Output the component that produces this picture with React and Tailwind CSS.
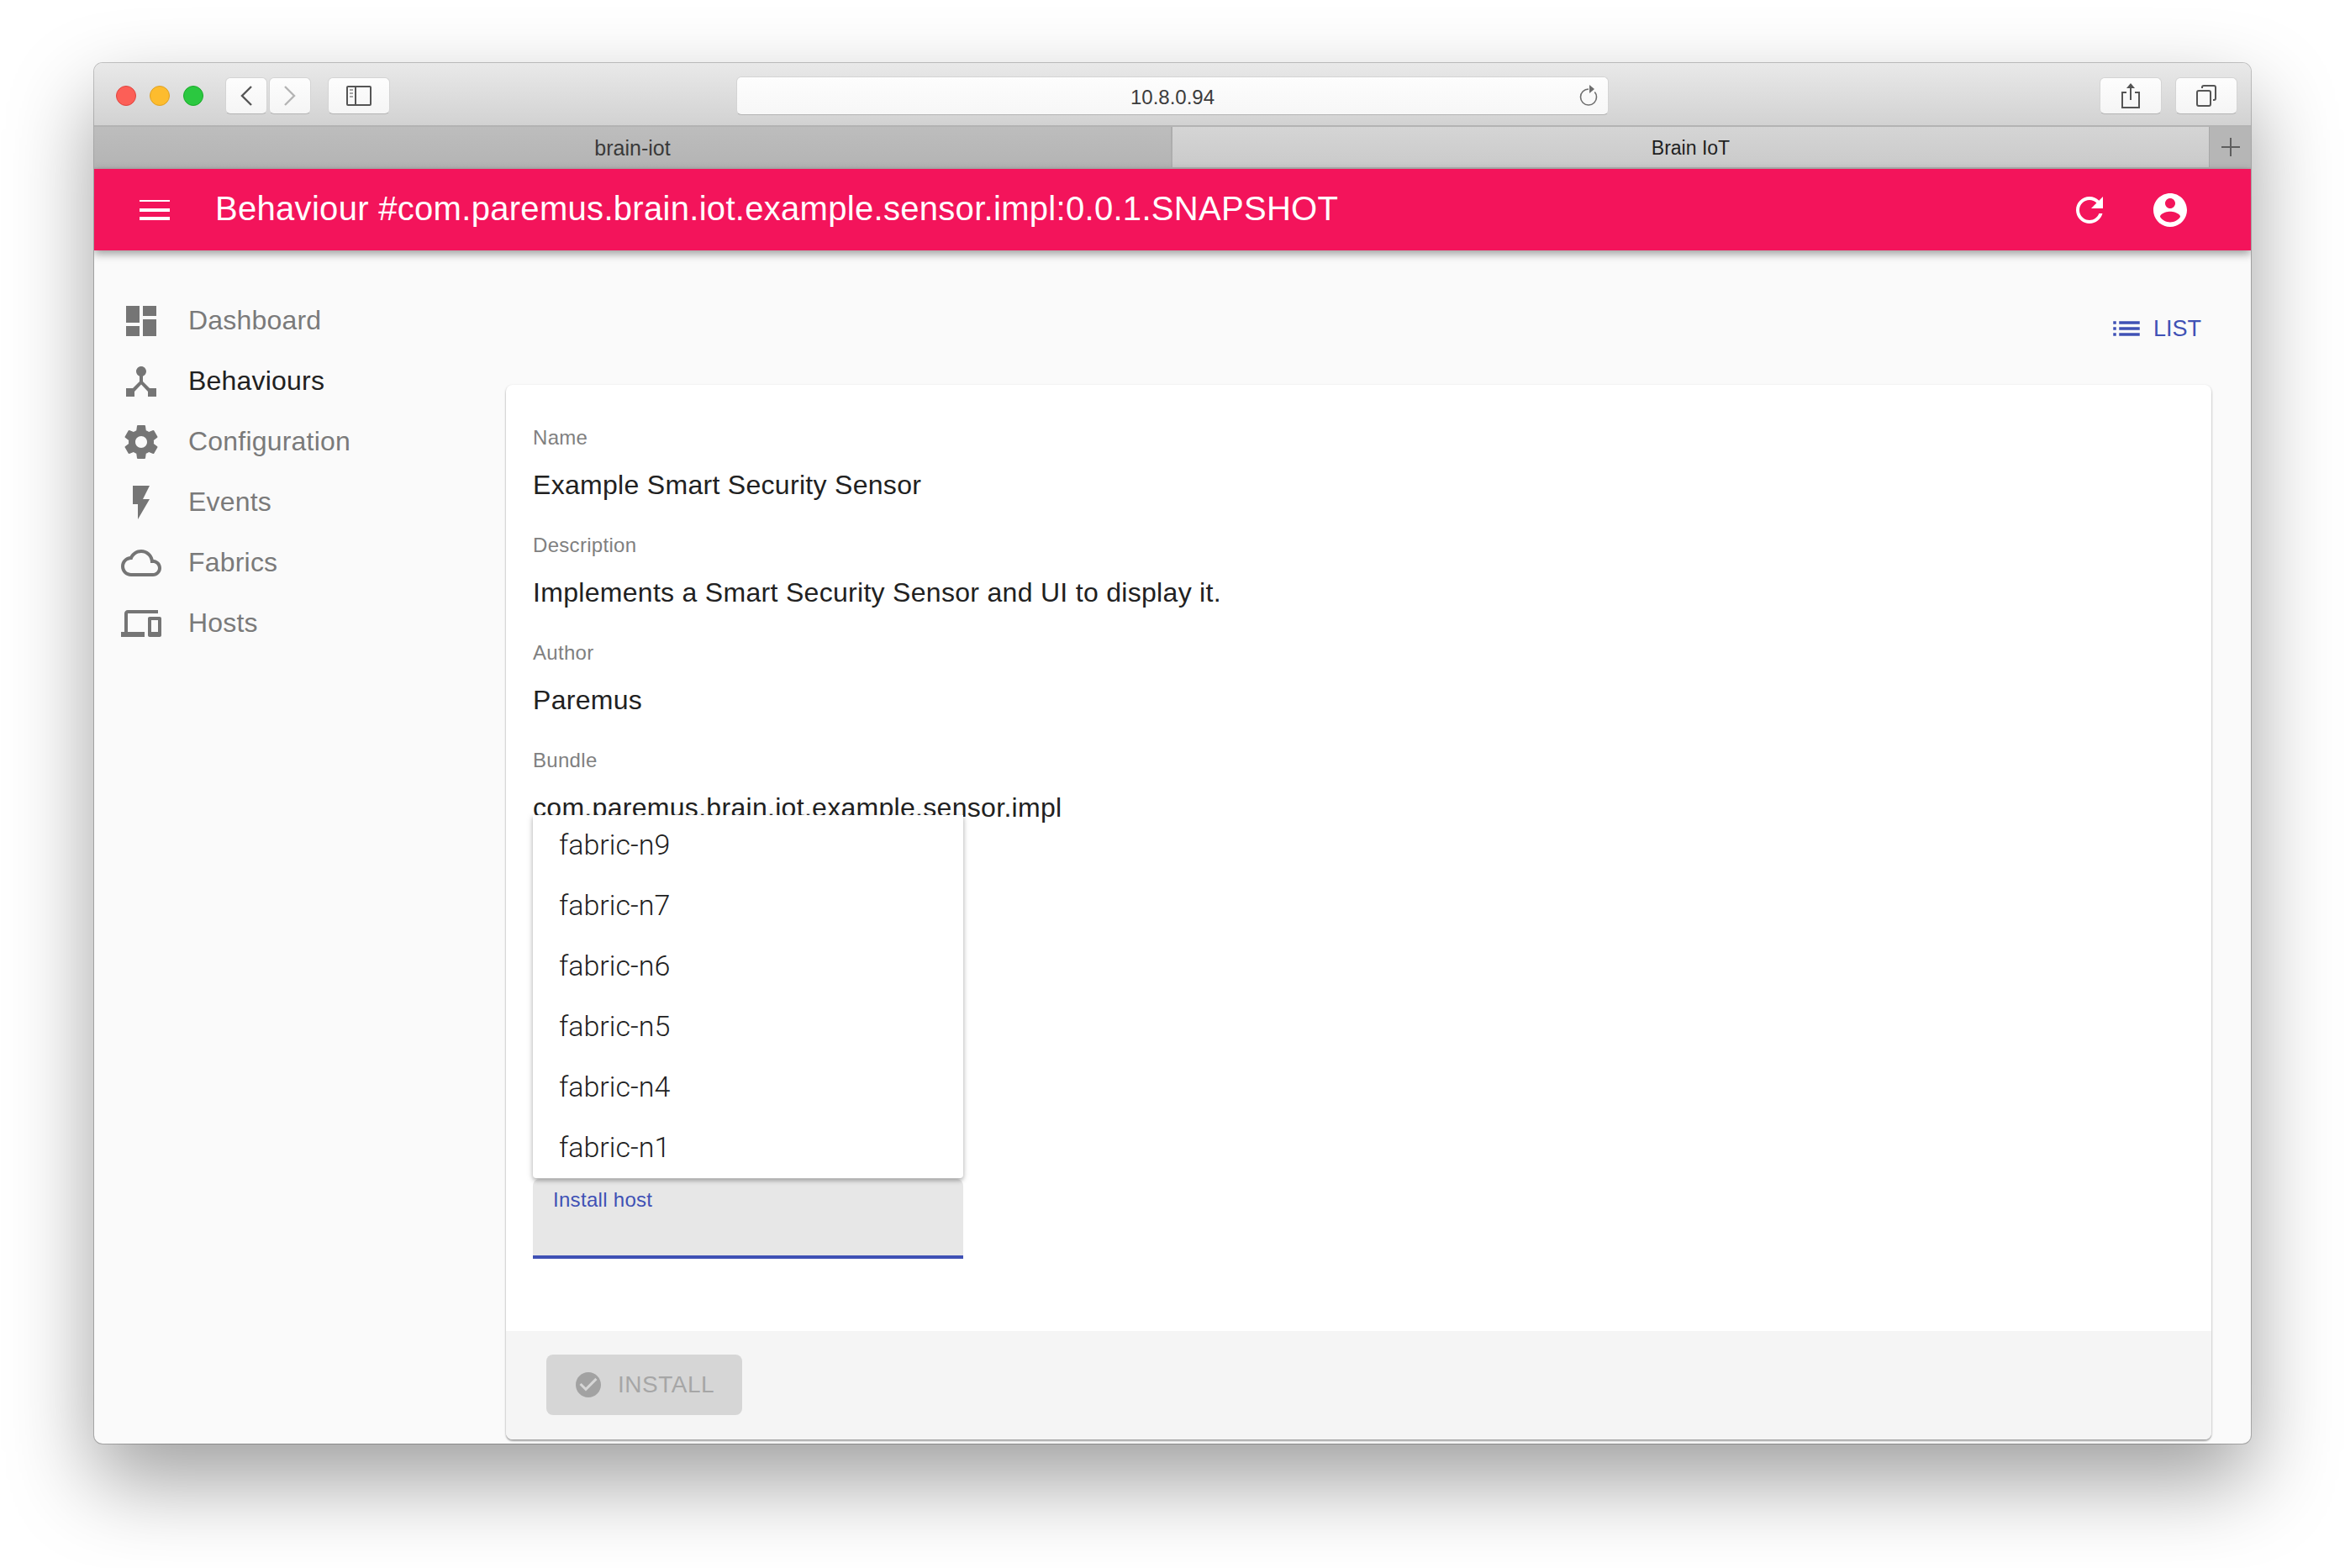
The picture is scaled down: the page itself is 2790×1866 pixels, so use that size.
import React from 'react';

const navItems = [
    { label: 'Dashboard', d: 'M3 13h8V3H3v10zm0 8h8v-6H3v6zm10 0h8V11h-8v10zm0-18v6h8V3h-8z' },
    { label: 'Behaviours', active: true, d: 'M17 16l-4-4V8.82C14.16 8.4 15 7.3 15 6c0-1.66-1.34-3-3-3S9 4.34 9 6c0 1.3.84 2.4 2 2.82V12l-4 4H3v5h5v-3.05l4-4.2 4 4.2V21h5v-5h-4z' },
    { label: 'Configuration', d: 'M19.43 12.98c.04-.32.07-.64.07-.98s-.03-.66-.07-.98l2.11-1.65c.19-.15.24-.42.12-.64l-2-3.46c-.12-.22-.39-.3-.61-.22l-2.49 1c-.52-.4-1.08-.73-1.69-.98l-.38-2.65C14.46 2.18 14.25 2 14 2h-4c-.25 0-.46.18-.49.42l-.38 2.65c-.61.25-1.17.59-1.69.98l-2.49-1c-.23-.09-.49 0-.61.22l-2 3.46c-.13.22-.07.49.12.64l2.11 1.65c-.04.32-.07.65-.07.98s.03.66.07.98l-2.11 1.65c-.19.15-.24.42-.12.64l2 3.46c.12.22.39.3.61.22l2.49-1c.52.4 1.08.73 1.69.98l.38 2.65c.03.24.24.42.49.42h4c.25 0 .46-.18.49-.42l.38-2.65c.61-.25 1.17-.59 1.69-.98l2.49 1c.23.09.49 0 .61-.22l2-3.46c.12-.22.07-.49-.12-.64l-2.11-1.65zM12 15.5c-1.93 0-3.5-1.57-3.5-3.5s1.57-3.5 3.5-3.5 3.5 1.57 3.5 3.5-1.57 3.5-3.5 3.5z' },
    { label: 'Events', d: 'M7 2v11h3v9l7-12h-4l4-8z' },
    { label: 'Fabrics', d: 'M19.35 10.04C18.67 6.59 15.64 4 12 4 9.11 4 6.6 5.64 5.35 8.04 2.34 8.36 0 10.91 0 14c0 3.31 2.69 6 6 6h13c2.76 0 5-2.24 5-5 0-2.64-2.05-4.78-4.65-4.96zM19 18H6c-2.21 0-4-1.79-4-4s1.79-4 4-4h.71C7.37 7.69 9.48 6 12 6c3.04 0 5.5 2.46 5.5 5.5v.5H19c1.66 0 3 1.34 3 3s-1.34 3-3 3z' },
    { label: 'Hosts', d: 'M4 6h18V4H4c-1.1 0-2 .9-2 2v11H0v3h14v-3H4V6zm19 2h-6c-.55 0-1 .45-1 1v10c0 .55.45 1 1 1h6c.55 0 1-.45 1-1V9c0-.55-.45-1-1-1zm-1 9h-4v-7h4v7z' },
];

const fields = [
    { label: 'Name', value: 'Example Smart Security Sensor' },
    { label: 'Description', value: 'Implements a Smart Security Sensor and UI to display it.' },
    { label: 'Author', value: 'Paremus' },
    { label: 'Bundle', value: 'com.paremus.brain.iot.example.sensor.impl' },
];

const hosts = ['fabric-n9', 'fabric-n7', 'fabric-n6', 'fabric-n5', 'fabric-n4', 'fabric-n1'];

function Icon({ d, className }) {
    return (
        <svg viewBox="0 0 24 24" fill="currentColor" className={className}>
            <path d={d} />
        </svg>
    );
}

function ToolButton({ className, children }) {
    return (
        <div className={`h-[44px] flex items-center justify-center rounded-[6px] bg-gradient-to-b from-[#fdfdfd] to-[#f5f5f5] border border-[#d4d4d4] border-b-[#b4b4b4] ${className}`}>
            {children}
        </div>
    );
}

export default function App() {
    return (
        <div className="w-[2790px] h-[1866px] bg-white pt-[75px] pl-[112px] overflow-hidden font-['Liberation_Sans',sans-serif]">
            <div className="w-[2566px] h-[1643px] flex flex-col rounded-[10px] overflow-hidden bg-[#fafafa] shadow-[0_44px_100px_rgba(0,0,0,0.38),0_0_0_1px_rgba(0,0,0,0.22)]">
                {/* Safari toolbar */}
                <div className="h-[76px] shrink-0 flex items-start pt-[17px] pl-[26px] pr-[16px] bg-gradient-to-b from-[#e9e9e9] to-[#d2d2d2] border-b-2 border-[#b3b3b3]">
                    <div className="flex gap-[16px] mt-[10px]">
                        <div className="w-[24px] h-[24px] rounded-full bg-[#fc5f57] border border-[#e0443e]" />
                        <div className="w-[24px] h-[24px] rounded-full bg-[#fdbc2e] border border-[#dea123]" />
                        <div className="w-[24px] h-[24px] rounded-full bg-[#2bc840] border border-[#1aab29]" />
                    </div>
                    <div className="flex gap-[2px] ml-[26px]">
                        <ToolButton className="w-[50px]">
                            <svg viewBox="0 0 14 24" fill="none" stroke="#555" strokeWidth="2.4" className="w-[14px] h-[24px]"><path d="M13 1 2 12l11 11" /></svg>
                        </ToolButton>
                        <ToolButton className="w-[50px]">
                            <svg viewBox="0 0 14 24" fill="none" stroke="#b4b4b4" strokeWidth="2.4" className="w-[14px] h-[24px]"><path d="m1 1 11 11L1 23" /></svg>
                        </ToolButton>
                    </div>
                    <ToolButton className="w-[74px] ml-[20px]">
                        <svg viewBox="0 0 30 24" fill="none" stroke="#555" strokeWidth="2" className="w-[30px] h-[24px]">
                            <rect x="1" y="1" width="28" height="22" rx="1" />
                            <path d="M11 1v22" />
                            <path d="M4 5h4M4 9h4M4 13h4" strokeWidth="1.6" stroke="#888" />
                        </svg>
                    </ToolButton>
                    <div className="relative w-[1038px] h-[46px] -mt-px ml-[412px] pt-[3px] flex items-center justify-center rounded-[6px] bg-gradient-to-b from-[#fdfdfd] to-[#f7f7f7] border border-[#d4d4d4] border-b-[#b4b4b4] text-[24px] text-[#3c3c3c]">
                        10.8.0.94
                        <svg viewBox="0 0 22 26" fill="none" stroke="#6e6e6e" strokeWidth="1.6" className="absolute right-[12px] top-[8px] w-[22px] h-[26px]">
                            <path d="M11 6a9.5 9.5 0 1 0 9.5 9.5c0-2.4-.8-4.4-2.2-6" />
                            <path d="M12 1v10l6-5z" fill="#6e6e6e" stroke="none" />
                        </svg>
                    </div>
                    <ToolButton className="w-[74px] ml-auto">
                        <svg viewBox="0 0 24 32" fill="none" stroke="#555" strokeWidth="2" className="w-[24px] h-[32px]">
                            <path d="M7 12H2v18h20V12h-5" />
                            <path d="M12 2v19" />
                            <path d="m7 7 5-6 5 6z" fill="#555" stroke="none" />
                        </svg>
                    </ToolButton>
                    <ToolButton className="w-[74px] ml-[16px]">
                        <svg viewBox="0 0 24 26" fill="none" stroke="#555" strokeWidth="2" className="w-[24px] h-[26px]">
                            <rect x="1" y="7" width="16" height="18" rx="2" />
                            <path d="M7 4V3a2 2 0 0 1 2-2h12a2 2 0 0 1 2 2v13a2 2 0 0 1-2 2h-1" />
                        </svg>
                    </ToolButton>
                </div>

                {/* Tabs */}
                <div className="h-[50px] shrink-0 flex border-b-2 border-[#b0b0b0]">
                    <div className="w-[1281px] pt-[3px] flex items-center justify-center text-[25px] text-[#3a3a3a] bg-gradient-to-b from-[#bdbdbd] to-[#b4b4b4]">brain-iot</div>
                    <div className="flex-1 pt-[3px] flex items-center justify-center text-[23px] text-[#1f1f1f] bg-gradient-to-b from-[#d5d5d5] to-[#cacaca] border-l-2 border-[#adadad]">Brain IoT</div>
                    <div className="w-[50px] flex items-center justify-center bg-[#b6b6b6] border-l border-[#a8a8a8]">
                        <svg viewBox="0 0 22 22" stroke="#5e5e5e" strokeWidth="2" className="w-[22px] h-[22px]"><path d="M11 0v22M0 11h22" /></svg>
                    </div>
                </div>

                {/* App bar */}
                <div className="relative z-10 h-[97px] shrink-0 flex items-center pl-[48px] pr-[72px] bg-[#f3145b] text-white shadow-[0_4px_10px_rgba(0,0,0,0.38)]">
                    <Icon d="M3 18h18v-2H3v2zm0-5h18v-2H3v2zm0-8v2h18V6H3z" className="w-[48px] h-[48px]" />
                    <span className="ml-[48px] mb-[3px] text-[40px] tracking-[0.3px]">Behaviour #com.paremus.brain.iot.example.sensor.impl:0.0.1.SNAPSHOT</span>
                    <Icon d="M17.65 6.35C16.2 4.9 14.21 4 12 4c-4.42 0-7.99 3.58-7.99 8s3.57 8 7.99 8c3.73 0 6.84-2.55 7.73-6h-2.08c-.82 2.33-3.04 4-5.65 4-3.31 0-6-2.69-6-6s2.69-6 6-6c1.66 0 3.14.69 4.22 1.78L13 11h7V4l-2.35 2.35z" className="w-[48px] h-[48px] ml-auto" />
                    <Icon d="M12 2C6.48 2 2 6.48 2 12s4.48 10 10 10 10-4.48 10-10S17.52 2 12 2zm0 3c1.66 0 3 1.34 3 3s-1.34 3-3 3-3-1.34-3-3 1.34-3 3-3zm0 14.2c-2.5 0-4.71-1.28-6-3.22.03-1.99 4-3.08 6-3.08 1.99 0 5.97 1.09 6 3.08-1.29 1.94-3.5 3.22-6 3.22z" className="w-[48px] h-[48px] ml-[48px]" />
                </div>

                <div className="flex-1 flex min-h-0">
                    {/* Sidebar */}
                    <div className="w-[490px] shrink-0 pt-[48px] pl-[32px]">
                        {navItems.map((item) => (
                            <div key={item.label} className="h-[72px] flex items-center">
                                <Icon d={item.d} className="w-[48px] h-[48px] text-[#757575]" />
                                <span className={`ml-[32px] mb-[2px] text-[32px] tracking-[0.2px] ${item.active ? 'text-[#212121]' : 'text-[#7a7a7a]'}`}>{item.label}</span>
                            </div>
                        ))}
                    </div>

                    {/* Main */}
                    <div className="flex-1 flex flex-col pr-[47px] pb-[5px]">
                        <div className="h-[160px] shrink-0 flex justify-end items-start pt-[65px] pr-[12px]">
                            <div className="flex items-center text-[#3f51b5] text-[27px] h-[56px]">
                                <Icon d="M3 13h2v-2H3v2zm0 4h2v-2H3v2zm0-8h2V7H3v2zm4 4h14v-2H7v2zm0 4h14v-2H7v2zM7 7v2h14V7H7z" className="w-[42px] h-[42px]" />
                                <span className="ml-[11px]">LIST</span>
                            </div>
                        </div>
                        <div className="relative flex-1 flex flex-col rounded-[8px] bg-white shadow-[0_1px_3px_rgba(0,0,0,0.2),0_2px_2px_rgba(0,0,0,0.25)] text-[#212121]">
                            <div className="flex-1 pt-[43px] pl-[32px] overflow-hidden rounded-t-[8px]">
                                {fields.map((f) => (
                                    <div key={f.label} className="h-[128px]">
                                        <div className="h-[40px] leading-[40px] text-[24px] tracking-[0.3px] text-[#808080]">{f.label}</div>
                                        <div className="h-[48px] mt-[12px] leading-[48px] text-[32px] tracking-[0.3px]">{f.value}</div>
                                    </div>
                                ))}
                                {/* filled select */}
                                <div className="mt-[390px] w-[512px] h-[95px] pt-[7px] pl-[24px] bg-[#e7e7e7] rounded-t-[8px] border-b-4 border-[#3f51b5] text-[24px] tracking-[0.3px] text-[#3f51b5]">
                                    Install host
                                </div>
                            </div>
                            <div className="h-[129px] shrink-0 pt-[28px] pl-[48px] bg-[#f5f5f5] rounded-b-[8px]">
                                <div className="w-[233px] h-[72px] flex items-center pl-[32px] rounded-[8px] bg-[#d6d6d6] text-[28px] text-[#a6a6a6]">
                                    <Icon d="M12 2C6.48 2 2 6.48 2 12s4.48 10 10 10 10-4.48 10-10S17.52 2 12 2zm-2 15l-5-5 1.41-1.41L10 14.17l7.59-7.59L19 8l-9 9z" className="w-[36px] h-[36px] text-[#a2a2a2]" />
                                    <span className="ml-[17px] tracking-[0.5px]">INSTALL</span>
                                </div>
                            </div>

                            {/* open dropdown menu */}
                            <div className="absolute z-10 top-[512px] left-[32px] w-[512px] bg-white rounded-b-[4px] shadow-[0_3px_5px_rgba(0,0,0,0.25),0_1px_10px_rgba(0,0,0,0.12)]">
                                {hosts.map((h) => (
                                    <div key={h} className="h-[72px] pb-[2px] flex items-center pl-[31px] text-[34px] font-light text-[#212121] font-['Roboto',sans-serif]">{h}</div>
                                ))}
                            </div>
                        </div>
                    </div>
                </div>
            </div>
        </div>
    );
}
